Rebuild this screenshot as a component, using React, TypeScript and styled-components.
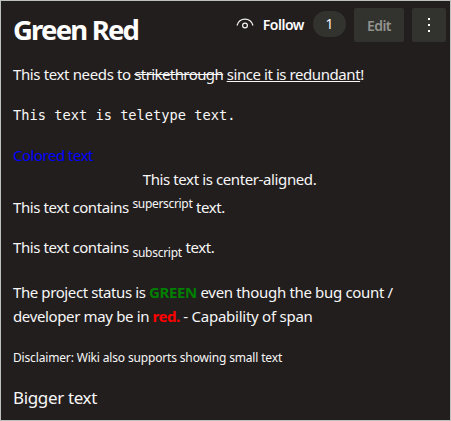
import React from 'react';
import styled, { createGlobalStyle } from 'styled-components';

const GlobalStyle = createGlobalStyle`
  * { box-sizing: border-box; }
  body { margin: 0; background: #231e1e; }
`;

const Page = styled.main`
  width: 451px;
  height: 421px;
  overflow: hidden;
  background: #231e1e;
  border: 1px solid #bdc0bd;
  color: #f7f7f7;
  font-family: 'Noto Sans', 'Open Sans', sans-serif;
  font-size: 15px;
  line-height: 24px;
`;

const Header = styled.header`
  display: flex;
  align-items: flex-start;
  height: 61px;
  padding: 7px 4px 0 12px;
`;

const Title = styled.h1`
  flex: 1;
  margin: 3px 0 0;
  font-size: 27.5px;
  font-weight: 700;
  line-height: 38px;
  letter-spacing: -1.8px;
  color: #fff;
`;

const Follow = styled.button`
  display: flex;
  align-items: center;
  height: 34px;
  padding: 0;
  border: 0;
  background: none;
  color: #fff;
  font: 600 14px/20px 'Noto Sans', sans-serif;
  letter-spacing: -0.45px;
`;

const EyeIcon = styled.svg`
  width: 18px;
  height: 12px;
  margin: 0 9px 3px 0;
`;

const Count = styled.span`
  width: 33px;
  height: 26px;
  margin: 3px 8px 0 9px;
  border-radius: 13px;
  background: #32332e;
  font-size: 14px;
  line-height: 26px;
  text-align: center;
`;

const ToolButton = styled.button<{ $width: number }>`
  display: flex;
  align-items: center;
  justify-content: center;
  width: ${(p) => p.$width}px;
  height: 34px;
  margin-right: ${(p) => (p.$width > 40 ? 8 : 0)}px;
  padding: 2px 0 0;
  border: 0;
  border-radius: 2px;
  background: #32332e;
  color: #92938f;
  font: 600 14px/20px 'Noto Sans', sans-serif;
  letter-spacing: -0.55px;
`;

const MoreIcon = styled.svg`
  width: 2px;
  height: 14px;
  margin-bottom: 2px;
`;

const Line = styled.p<{ $gap?: number; $track?: number }>`
  margin: 0 0 ${(p) => p.$gap ?? 16}px;
  padding-left: 12px;
  white-space: pre;
  letter-spacing: ${(p) => p.$track ?? -0.4}px;
`;

const Tracked = styled.span<{ $track: number }>`
  letter-spacing: ${(p) => p.$track}px;
`;

const Strike = styled.del`
  letter-spacing: -0.59px;
`;

const Underlined = styled.u`
  letter-spacing: -0.43px;
  text-underline-offset: 1px;
  text-decoration-thickness: 1px;
  text-decoration-skip-ink: none;
`;

const Teletype = styled(Line)`
  font-family: 'DejaVu Sans Mono', monospace;
  font-size: 13.7px;
  letter-spacing: 0;
`;

const Colored = styled(Line)`
  color: #0000ff;
`;

const Centered = styled(Line)`
  padding-left: 8px;
  text-align: center;
`;

const Sup = styled.sup`
  position: relative;
  top: -5px;
  font-size: 12px;
  line-height: 0;
  vertical-align: baseline;
  letter-spacing: -0.32px;
`;

const Sub = styled(Sup).attrs({ as: 'sub' })`
  top: 4px;
  letter-spacing: -0.26px;
`;

const Status = styled.b<{ $color: string; $track: number }>`
  color: ${(p) => p.$color};
  font-weight: 700;
  letter-spacing: ${(p) => p.$track}px;
`;

const Small = styled(Line)`
  font-size: 12px;
`;

const Big = styled(Line)`
  font-size: 17px;
`;

export default function App() {
  return (
    <>
      <GlobalStyle />
      <Page>
        <Header>
          <Title>Green Red</Title>
          <Follow>
            <EyeIcon viewBox="0 0 18 12" fill="none" stroke="#f4f4f4" strokeWidth="1.2">
              <path d="M1 7.5C2.2 3.5 5.2 1.2 9 1.2s6.8 2.3 8 6.3" />
              <circle cx="9" cy="7.5" r="2.4" />
            </EyeIcon>
            Follow
          </Follow>
          <Count>1</Count>
          <ToolButton $width={50}>Edit</ToolButton>
          <ToolButton $width={34} aria-label="More actions">
            <MoreIcon viewBox="0 0 2 14" fill="#fff">
              <rect width="2" height="2" />
              <rect y="6" width="2" height="2" />
              <rect y="12" width="2" height="2" />
            </MoreIcon>
          </ToolButton>
        </Header>
        <Line $gap={17} $track={-0.37}>
          This text needs to <Strike>strikethrough</Strike> <Underlined>since it is redundant</Underlined>!
        </Line>
        <Teletype>This text is teletype text.</Teletype>
        <Colored $gap={0} $track={-0.49}>Colored text</Colored>
        <Centered $gap={4} $track={-0.39}>This text is center-aligned.</Centered>
        <Line>
          This text contains <Sup>superscript</Sup> text.
        </Line>
        <Line $gap={21}>
          This text contains <Sub>subscript</Sub> text.
        </Line>
        <Line $gap={18}>
          The project status is <Status $color="#008000" $track={-0.34}>GREEN</Status>
          <Tracked $track={-0.33}> even though the bug count /</Tracked>
          <br />
          <Tracked $track={-0.36}>developer may be in </Tracked>
          <Status $color="#ff0000" $track={-0.51}>red.</Status>
          <Tracked $track={-0.25}> - Capability of span</Tracked>
        </Line>
        <Small $track={-0.16}>Disclaimer: Wiki also supports showing small text</Small>
        <Big $track={-0.35}>Bigger text</Big>
      </Page>
    </>
  );
}
